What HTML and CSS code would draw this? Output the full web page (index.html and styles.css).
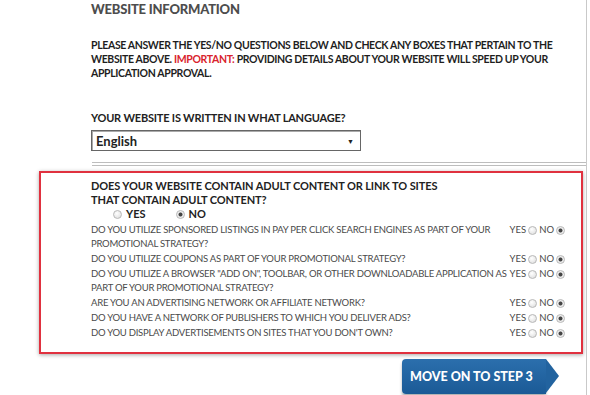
FILE: index.html
```html
<!DOCTYPE html>
<html lang="en">
<head>
    <meta charset="UTF-8">
    <meta name="viewport" content="width=device-width, initial-scale=1.0">
    <title>Website Information</title>
    <link rel="stylesheet" href="styles.css">
</head>
<body>
    <div class="page">
        <!-- Intro -->
        <section class="info">
            <h2 class="info-title">WEBSITE INFORMATION</h2>
            <p class="info-text">PLEASE ANSWER THE YES/NO QUESTIONS BELOW AND CHECK ANY BOXES THAT PERTAIN TO THE WEBSITE ABOVE. <span class="important">IMPORTANT:</span> PROVIDING DETAILS ABOUT YOUR WEBSITE WILL SPEED UP YOUR APPLICATION APPROVAL.</p>
            <div class="lang-label">YOUR WEBSITE IS WRITTEN IN WHAT LANGUAGE?</div>
            <div class="lang-select">
                <span>English</span>
                <span class="caret">&#9660;</span>
            </div>
        </section>

        <div class="divider"></div>

        <!-- Questions -->
        <section class="questions">
            <div class="adult-q">DOES YOUR WEBSITE CONTAIN ADULT CONTENT OR LINK TO SITES<br>THAT CONTAIN ADULT CONTENT?</div>
            <div class="adult-answer">
                <label class="adult-opt"><span class="radio"></span>YES</label>
                <label class="adult-opt"><span class="radio checked"></span>NO</label>
            </div>

            <div class="q-list">
                <div class="q-row">
                    <div class="q-text">DO YOU UTILIZE SPONSORED LISTINGS IN PAY PER CLICK SEARCH ENGINES AS PART OF YOUR PROMOTIONAL STRATEGY?</div>
                    <div class="q-answer">YES <span class="radio"></span> NO <span class="radio checked"></span></div>
                </div>
                <div class="q-row">
                    <div class="q-text">DO YOU UTILIZE COUPONS AS PART OF YOUR PROMOTIONAL STRATEGY?</div>
                    <div class="q-answer">YES <span class="radio"></span> NO <span class="radio checked"></span></div>
                </div>
                <div class="q-row">
                    <div class="q-text">DO YOU UTILIZE A BROWSER "ADD ON", TOOLBAR, OR OTHER DOWNLOADABLE APPLICATION AS PART OF YOUR PROMOTIONAL STRATEGY?</div>
                    <div class="q-answer">YES <span class="radio"></span> NO <span class="radio checked"></span></div>
                </div>
                <div class="q-row">
                    <div class="q-text">ARE YOU AN ADVERTISING NETWORK OR AFFILIATE NETWORK?</div>
                    <div class="q-answer">YES <span class="radio"></span> NO <span class="radio checked"></span></div>
                </div>
                <div class="q-row">
                    <div class="q-text">DO YOU HAVE A NETWORK OF PUBLISHERS TO WHICH YOU DELIVER ADS?</div>
                    <div class="q-answer">YES <span class="radio"></span> NO <span class="radio checked"></span></div>
                </div>
                <div class="q-row">
                    <div class="q-text">DO YOU DISPLAY ADVERTISEMENTS ON SITES THAT YOU DON'T OWN?</div>
                    <div class="q-answer">YES <span class="radio"></span> NO <span class="radio checked"></span></div>
                </div>
            </div>
        </section>

        <div class="actions">
            <a class="next-btn" href="#">MOVE ON TO STEP 3</a>
        </div>
    </div>
</body>
</html>
```

FILE: styles.css
```css
body {
    margin: 0;
    padding: 0;
    background: #fff;
    font-family: Lato, "Open Sans", sans-serif;
}

.page {
    width: 587px;
    height: 395px;
    box-sizing: border-box;
    border-right: 1px solid #c9c9c9;
    overflow: hidden;
}

.info {
    padding: 1px 0 0 91px;
}
.info-title {
    margin: 0;
    font-size: 13px;
    line-height: 17px;
    font-weight: 900;
    letter-spacing: -0.2px;
    color: #4d4d4d;
}
.info-text {
    margin: 20px 0 0;
    width: 472px;
    font-size: 10.5px;
    line-height: 14px;
    font-weight: 700;
    letter-spacing: -0.35px;
    color: #1e1e1e;
}
.important {
    color: #d9232d;
}
.lang-label {
    margin-top: 31px;
    font-size: 11px;
    line-height: 14px;
    font-weight: 700;
    letter-spacing: -0.2px;
    color: #222;
}
.lang-select {
    margin-top: 5px;
    width: 270px;
    height: 21px;
    box-sizing: border-box;
    display: flex;
    justify-content: space-between;
    align-items: center;
    padding: 0 6px 0 4px;
    border: 1px solid #666;
    box-shadow: inset 1px 1px 0 #aaa;
    font-size: 13px;
    font-weight: 700;
    color: #222;
}
.caret {
    font-size: 7px;
}

.divider {
    margin: 11px 0 0 92px;
    height: 2px;
    border-top: 1px solid #bdbdbd;
    border-bottom: 1px solid #bdbdbd;
}

.questions {
    margin: 5px 0 0 39px;
    width: 544px;
    box-sizing: border-box;
    padding: 6px 16px 12px 50px;
    border: 2px solid #e0313f;
    box-shadow: 0 1px 4px rgba(0, 0, 0, 0.35);
}
.adult-q {
    font-size: 11px;
    line-height: 14px;
    font-weight: 700;
    letter-spacing: -0.1px;
    color: #222;
}
.adult-answer {
    display: flex;
    padding-left: 22px;
    font-size: 11px;
    line-height: 14px;
    font-weight: 700;
    color: #222;
}
.adult-opt {
    display: flex;
    align-items: center;
    gap: 4px;
    margin-right: 30px;
}

.q-list {
    margin-top: 2px;
}
.q-row {
    display: flex;
    justify-content: space-between;
    gap: 2px;
    margin-top: 1px;
    font-size: 9.5px;
    line-height: 14px;
    color: #4a4a4a;
}
.q-text {
    flex: 1 1 auto;
    min-width: 0;
    max-width: 418px;
    letter-spacing: -0.25px;
}
.q-answer {
    flex: 0 0 auto;
    display: flex;
    align-items: center;
    gap: 2px;
    height: 14px;
    white-space: nowrap;
}

.radio {
    display: inline-block;
    width: 7px;
    height: 7px;
    border-radius: 50%;
    border: 1px solid #b8b8b8;
    background: radial-gradient(circle at 40% 35%, #fff, #dadada);
}
.radio.checked {
    background: radial-gradient(circle, #444 0 1.6px, #eee 2.4px);
}

.actions {
    display: flex;
    justify-content: flex-end;
    margin-top: 5px;
    padding-right: 27px;
}
.next-btn {
    position: relative;
    display: flex;
    align-items: center;
    width: 136px;
    height: 35px;
    padding-left: 8px;
    margin-right: 13px;
    border-radius: 4px 0 0 4px;
    background: linear-gradient(#2b6fad, #1b5a96);
    box-shadow: 0 3px 3px rgba(0, 0, 0, 0.3);
    color: #fff;
    font-size: 12.5px;
    font-weight: 900;
    text-decoration: none;
}
.next-btn::after {
    content: "";
    position: absolute;
    right: -13px;
    top: 0;
    border-left: 13px solid #22639f;
    border-top: 17.5px solid transparent;
    border-bottom: 17.5px solid transparent;
}
```
